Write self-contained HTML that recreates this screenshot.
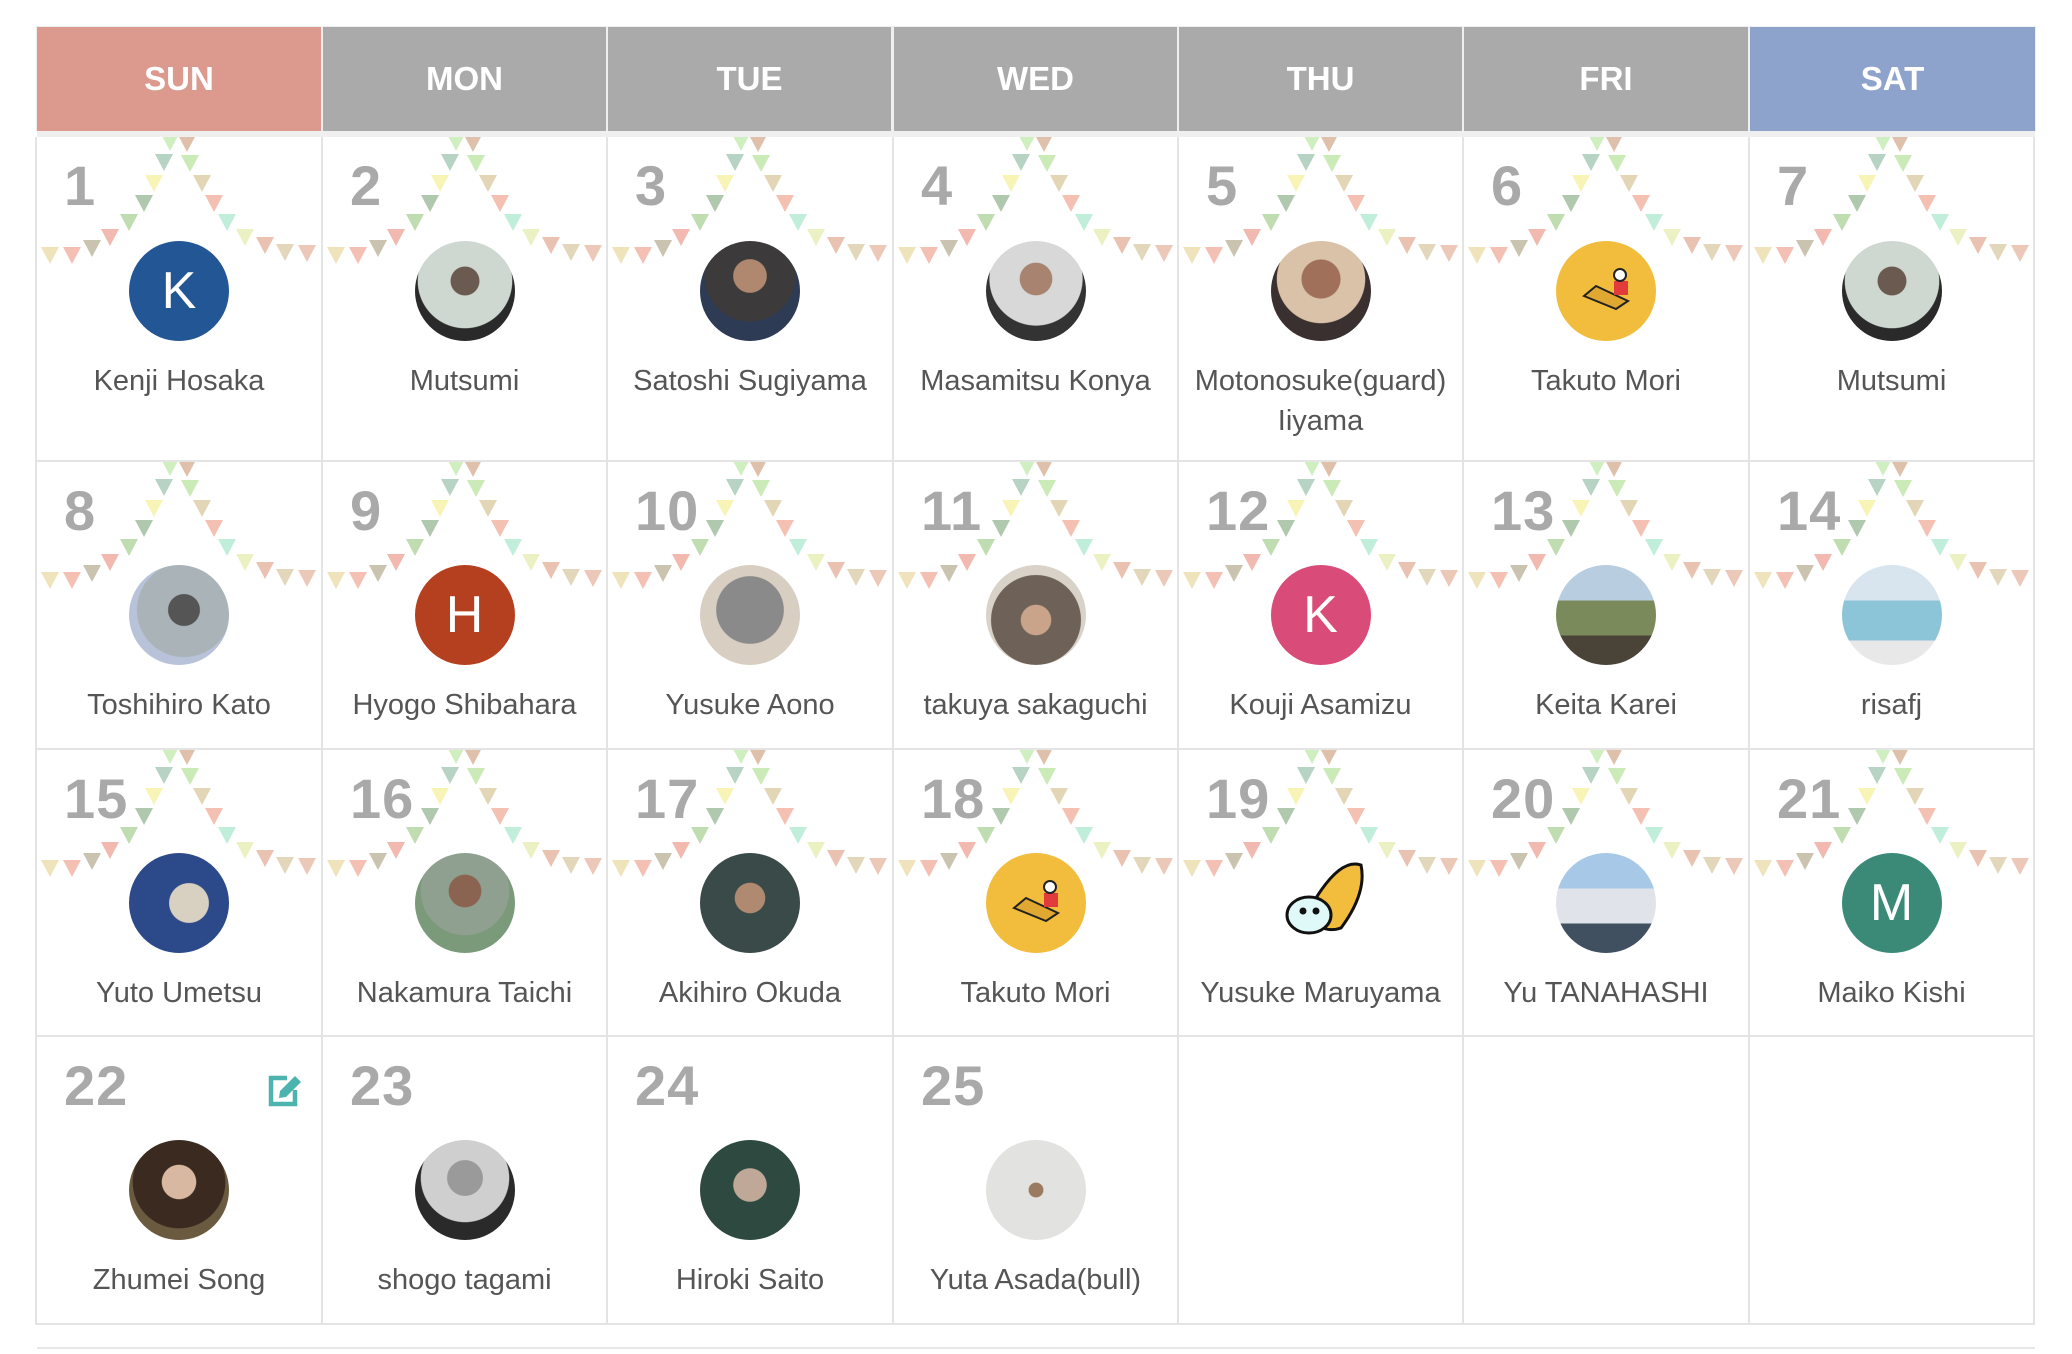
<!DOCTYPE html>
<html><head><meta charset="utf-8">
<style>
*{margin:0;padding:0;box-sizing:border-box}
body{width:2072px;height:1354px;background:#fff;position:relative;overflow:hidden;font-family:"Liberation Sans",sans-serif}
.h{position:absolute;top:27px;height:104px;color:#fff;font-weight:bold;font-size:33px;text-align:center;line-height:104px}
.band{position:absolute;left:37px;top:131px;width:1998px;height:6px;background:#efefef}
.c{position:absolute;border-right:2px solid #e4e4e4;border-bottom:2px solid #e4e4e4;background:transparent}
.c svg.b{position:absolute;left:0;top:0}
.n{position:absolute;left:27px;top:16px;font-size:56px;font-weight:bold;color:#a9a9a9;letter-spacing:1px}
.a{position:absolute;left:50%;margin-left:-50px;top:104px;width:100px;height:100px;border-radius:50%;color:#fff;font-size:52px;text-align:center;line-height:100px}
.t{position:absolute;left:0;right:0;top:224px;text-align:center;font-size:29px;color:#555;line-height:40px;white-space:nowrap}
</style></head><body>
<svg width="0" height="0" style="position:absolute">
<defs>
<symbol id="bt" viewBox="0 0 286 140">
<g opacity="0.72">
<polygon points="124,-3 142,-3 133,14" fill="#bfe9a9"/>
<polygon points="118,17 136,17 127,34" fill="#9cc3ac"/>
<polygon points="108,38 126,38 117,55" fill="#f5f09a"/>
<polygon points="98,58 116,58 107,75" fill="#93b48e"/>
<polygon points="83,77 101,77 92,94" fill="#a8cf94"/>
<polygon points="64,92 82,92 73,109" fill="#ec9f91"/>
<polygon points="46,103 64,103 55,120" fill="#b7ad92"/>
<polygon points="26,110 44,110 35,127" fill="#f2a898"/>
<polygon points="4,110 22,110 13,127" fill="#e9d9a1"/>
<polygon points="141,-2 159,-2 150,15" fill="#d3a98c"/>
<polygon points="144,18 162,18 153,35" fill="#b6e39c"/>
<polygon points="156,38 174,38 165,55" fill="#d9c79a"/>
<polygon points="168,58 186,58 177,75" fill="#f0a995"/>
<polygon points="181,77 199,77 190,94" fill="#a8e8cc"/>
<polygon points="199,92 217,92 208,109" fill="#e6edae"/>
<polygon points="219,100 237,100 228,117" fill="#e3ab95"/>
<polygon points="239,107 257,107 248,124" fill="#d8c9a0"/>
<polygon points="261,108 279,108 270,125" fill="#e6b49f"/>
</g>
</symbol>
</defs>
</svg>

<div style="position:absolute;left:36px;top:26px;width:2000px;height:106px;background:#efefef"></div>
<div class="h" style="left:37px;width:284px;background:#dc9a8f">SUN</div>
<div class="h" style="left:323px;width:283px;background:#aaa">MON</div>
<div class="h" style="left:608px;width:283px;background:#aaa">TUE</div>
<div class="h" style="left:894px;width:283px;background:#aaa">WED</div>
<div class="h" style="left:1179px;width:283px;background:#aaa">THU</div>
<div class="h" style="left:1464px;width:284px;background:#aaa">FRI</div>
<div class="h" style="left:1750px;width:285px;background:#8ea3cc">SAT</div>
<div class="band"></div>
<div style="position:absolute;left:35px;top:137px;width:2px;height:1188px;background:#e4e4e4"></div>

<!-- Row 1 -->
<div class="c" style="left:37px;top:137px;width:286px;height:325px"><svg class="b" width="286" height="140"><use href="#bt"/></svg><div class="n">1</div><div class="a" style="background:#235695">K</div><div class="t">Kenji Hosaka</div></div>
<div class="c" style="left:323px;top:137px;width:285px;height:325px"><svg class="b" width="286" height="140"><use href="#bt"/></svg><div class="n">2</div><div class="a" style="background:radial-gradient(circle at 50% 40%,#6b5a50 0 18%,#cfd8d0 19% 60%,#2a2a2a 61%)"></div><div class="t">Mutsumi</div></div>
<div class="c" style="left:608px;top:137px;width:286px;height:325px"><svg class="b" width="286" height="140"><use href="#bt"/></svg><div class="n">3</div><div class="a" style="background:radial-gradient(circle at 50% 35%,#b08870 0 20%,#3c3a3a 21% 55%,#2e3b55 56%)"></div><div class="t">Satoshi Sugiyama</div></div>
<div class="c" style="left:894px;top:137px;width:285px;height:325px"><svg class="b" width="286" height="140"><use href="#bt"/></svg><div class="n">4</div><div class="a" style="background:radial-gradient(circle at 50% 38%,#a88470 0 20%,#d8d8d8 21% 58%,#333 59%)"></div><div class="t">Masamitsu Konya</div></div>
<div class="c" style="left:1179px;top:137px;width:285px;height:325px"><svg class="b" width="286" height="140"><use href="#bt"/></svg><div class="n">5</div><div class="a" style="background:radial-gradient(circle at 50% 38%,#a0705a 0 24%,#d9c2a8 25% 55%,#3a3030 56%)"></div><div class="t">Motonosuke(guard)<br>Iiyama</div></div>
<div class="c" style="left:1464px;top:137px;width:286px;height:325px"><svg class="b" width="286" height="140"><use href="#bt"/></svg><div class="n">6</div><div class="a" style="background:#f2bd3d"><svg width="100" height="100"><polygon points="28,55 60,68 72,60 40,45" fill="#e0a830" stroke="#222" stroke-width="2"/><rect x="58" y="40" width="14" height="14" fill="#e23b3b"/><circle cx="64" cy="34" r="6" fill="#fff" stroke="#222" stroke-width="2"/></svg></div><div class="t">Takuto Mori</div></div>
<div class="c" style="left:1750px;top:137px;width:285px;height:325px"><svg class="b" width="286" height="140"><use href="#bt"/></svg><div class="n">7</div><div class="a" style="background:radial-gradient(circle at 50% 40%,#6b5a50 0 18%,#cfd8d0 19% 60%,#2a2a2a 61%)"></div><div class="t">Mutsumi</div></div>

<!-- Row 2 -->
<div class="c" style="left:37px;top:462px;width:286px;height:288px"><svg class="b" width="286" height="140"><use href="#bt"/></svg><div class="n">8</div><div class="a" style="top:103px;background:radial-gradient(circle at 55% 45%,#555 0 20%,#a9b3b8 21% 60%,#b8c2d8 61%)"></div><div class="t" style="top:223px">Toshihiro Kato</div></div>
<div class="c" style="left:323px;top:462px;width:285px;height:288px"><svg class="b" width="286" height="140"><use href="#bt"/></svg><div class="n">9</div><div class="a" style="top:103px;background:#b5401f">H</div><div class="t" style="top:223px">Hyogo Shibahara</div></div>
<div class="c" style="left:608px;top:462px;width:286px;height:288px"><svg class="b" width="286" height="140"><use href="#bt"/></svg><div class="n">10</div><div class="a" style="top:103px;background:radial-gradient(circle at 50% 45%,#8a8a8a 0 45%,#d8cfc2 46%)"></div><div class="t" style="top:223px">Yusuke Aono</div></div>
<div class="c" style="left:894px;top:462px;width:285px;height:288px"><svg class="b" width="286" height="140"><use href="#bt"/></svg><div class="n">11</div><div class="a" style="top:103px;background:radial-gradient(circle at 50% 55%,#c9a48a 0 20%,#6e6258 21% 60%,#d9d2c8 61%)"></div><div class="t" style="top:223px">takuya sakaguchi</div></div>
<div class="c" style="left:1179px;top:462px;width:285px;height:288px"><svg class="b" width="286" height="140"><use href="#bt"/></svg><div class="n">12</div><div class="a" style="top:103px;background:#d94b78">K</div><div class="t" style="top:223px">Kouji Asamizu</div></div>
<div class="c" style="left:1464px;top:462px;width:286px;height:288px"><svg class="b" width="286" height="140"><use href="#bt"/></svg><div class="n">13</div><div class="a" style="top:103px;background:linear-gradient(180deg,#b8cde0 0 35%,#7a8a5a 36% 70%,#4a4438 71%)"></div><div class="t" style="top:223px">Keita Karei</div></div>
<div class="c" style="left:1750px;top:462px;width:285px;height:288px"><svg class="b" width="286" height="140"><use href="#bt"/></svg><div class="n">14</div><div class="a" style="top:103px;background:linear-gradient(180deg,#d8e4ee 0 35%,#8cc4d8 36% 75%,#e8e8e8 76%)"></div><div class="t" style="top:223px">risafj</div></div>

<!-- Row 3 -->
<div class="c" style="left:37px;top:750px;width:286px;height:287px"><svg class="b" width="286" height="140"><use href="#bt"/></svg><div class="n">15</div><div class="a" style="top:103px;background:radial-gradient(circle at 60% 50%,#d8d0c0 0 25%,#2c4a8a 26%)"></div><div class="t" style="top:223px">Yuto Umetsu</div></div>
<div class="c" style="left:323px;top:750px;width:285px;height:287px"><svg class="b" width="286" height="140"><use href="#bt"/></svg><div class="n">16</div><div class="a" style="top:103px;background:radial-gradient(circle at 50% 38%,#8a6450 0 20%,#8fa090 21% 55%,#7a9a7a 56%)"></div><div class="t" style="top:223px">Nakamura Taichi</div></div>
<div class="c" style="left:608px;top:750px;width:286px;height:287px"><svg class="b" width="286" height="140"><use href="#bt"/></svg><div class="n">17</div><div class="a" style="top:103px;background:radial-gradient(circle at 50% 45%,#b08a70 0 20%,#3a4a48 21%)"></div><div class="t" style="top:223px">Akihiro Okuda</div></div>
<div class="c" style="left:894px;top:750px;width:285px;height:287px"><svg class="b" width="286" height="140"><use href="#bt"/></svg><div class="n">18</div><div class="a" style="top:103px;background:#f2bd3d"><svg width="100" height="100"><polygon points="28,55 60,68 72,60 40,45" fill="#e0a830" stroke="#222" stroke-width="2"/><rect x="58" y="40" width="14" height="14" fill="#e23b3b"/><circle cx="64" cy="34" r="6" fill="#fff" stroke="#222" stroke-width="2"/></svg></div><div class="t" style="top:223px">Takuto Mori</div></div>
<div class="c" style="left:1179px;top:750px;width:285px;height:287px"><svg class="b" width="286" height="140"><use href="#bt"/></svg><div class="n">19</div><div class="a" style="top:103px"><svg width="100" height="100"><path d="M45,45 Q70,5 90,12 Q96,40 70,75 Q55,80 45,70 Z" fill="#f2bd3d" stroke="#111" stroke-width="3"/><ellipse cx="38" cy="62" rx="22" ry="18" fill="#dff8f8" stroke="#111" stroke-width="3"/><circle cx="32" cy="58" r="3.5" fill="#111"/><circle cx="45" cy="58" r="3.5" fill="#111"/></svg></div><div class="t" style="top:223px">Yusuke Maruyama</div></div>
<div class="c" style="left:1464px;top:750px;width:286px;height:287px"><svg class="b" width="286" height="140"><use href="#bt"/></svg><div class="n">20</div><div class="a" style="top:103px;background:linear-gradient(180deg,#a8c8e8 0 35%,#e0e4ea 36% 70%,#405060 71%)"></div><div class="t" style="top:223px">Yu TANAHASHI</div></div>
<div class="c" style="left:1750px;top:750px;width:285px;height:287px"><svg class="b" width="286" height="140"><use href="#bt"/></svg><div class="n">21</div><div class="a" style="top:103px;background:#3a8a77">M</div><div class="t" style="top:223px">Maiko Kishi</div></div>

<!-- Row 4 -->
<div class="c" style="left:37px;top:1037px;width:286px;height:288px"><div class="n">22</div>
<svg style="position:absolute;left:228px;top:35px" width="38" height="38" viewBox="0 0 38 38"><path d="M22,6 H6 V32 H30 V18" fill="none" stroke="#4db3ae" stroke-width="4.5"/><path d="M14,26 L15,19 L30,4 L36,10 L21,25 Z" fill="#4db3ae"/></svg>
<div class="a" style="top:103px;background:radial-gradient(circle at 50% 42%,#d8b8a0 0 22%,#3a2a20 23% 60%,#6a5a40 61%)"></div><div class="t" style="top:223px">Zhumei Song</div></div>
<div class="c" style="left:323px;top:1037px;width:285px;height:288px"><div class="n">23</div><div class="a" style="top:103px;background:radial-gradient(circle at 50% 38%,#9a9a9a 0 22%,#cfcfcf 23% 55%,#2a2a2a 56%)"></div><div class="t" style="top:223px">shogo tagami</div></div>
<div class="c" style="left:608px;top:1037px;width:286px;height:288px"><div class="n">24</div><div class="a" style="top:103px;background:radial-gradient(circle at 50% 45%,#c0a898 0 22%,#2e4a40 23%)"></div><div class="t" style="top:223px">Hiroki Saito</div></div>
<div class="c" style="left:894px;top:1037px;width:285px;height:288px"><div class="n">25</div><div class="a" style="top:103px;background:radial-gradient(circle at 50% 50%,#9a7a60 0 10%,#e2e2e0 11%)"></div><div class="t" style="top:223px">Yuta Asada(bull)</div></div>
<div class="c" style="left:1179px;top:1037px;width:285px;height:288px"></div>
<div class="c" style="left:1464px;top:1037px;width:286px;height:288px"></div>
<div class="c" style="left:1750px;top:1037px;width:285px;height:288px"></div>

<div style="position:absolute;left:37px;top:1347px;width:1998px;height:2px;background:#e8e8e8"></div>
</body></html>
